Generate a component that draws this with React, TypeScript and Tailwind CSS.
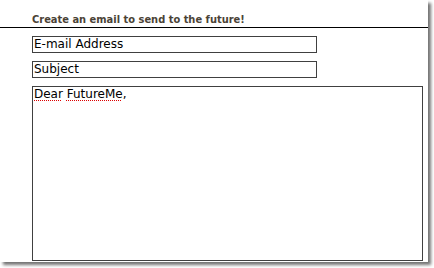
import React from 'react';

const font = { fontFamily: '"DejaVu Sans", Verdana, sans-serif' };
const headingFont = { fontFamily: '"DejaVu Sans Condensed", "DejaVu Sans", Verdana, sans-serif' };

function Field({ children, className = '' }: { children: React.ReactNode; className?: string }) {
  return (
    <div className={`border border-[#404040] bg-white px-[1px] text-[12px] leading-[15px] text-black ${className}`}>
      {children}
    </div>
  );
}

function Squiggle({ children }: { children: React.ReactNode }) {
  return (
    <span className="underline decoration-dotted decoration-[#d00] decoration-1 underline-offset-2">{children}</span>
  );
}

export default function App() {
  return (
    <div className="w-[434px] h-[268px] bg-white overflow-hidden" style={font}>
      <div className="w-[428px] h-[262px] bg-white shadow-[3px_3px_3px_rgba(0,0,0,0.55)]">
        {/* Heading */}
        <div
          className="pt-[13px] pb-[1px] border-b border-black pl-[32px] text-[11px] leading-[13px] font-bold text-[#4b4336]"
          style={headingFont}
        >
          Create an email to send to the future!
        </div>

        <div className="flex flex-col gap-[8px] pl-[32px] pt-[8px]">
          <Field className="w-[285px] h-[17px]">E-mail Address</Field>
          <Field className="w-[285px] h-[17px]">Subject</Field>
          <Field className="w-[391px] h-[175px]">
            <Squiggle>Dear</Squiggle> <Squiggle>FutureMe</Squiggle>,
          </Field>
        </div>
      </div>
    </div>
  );
}
